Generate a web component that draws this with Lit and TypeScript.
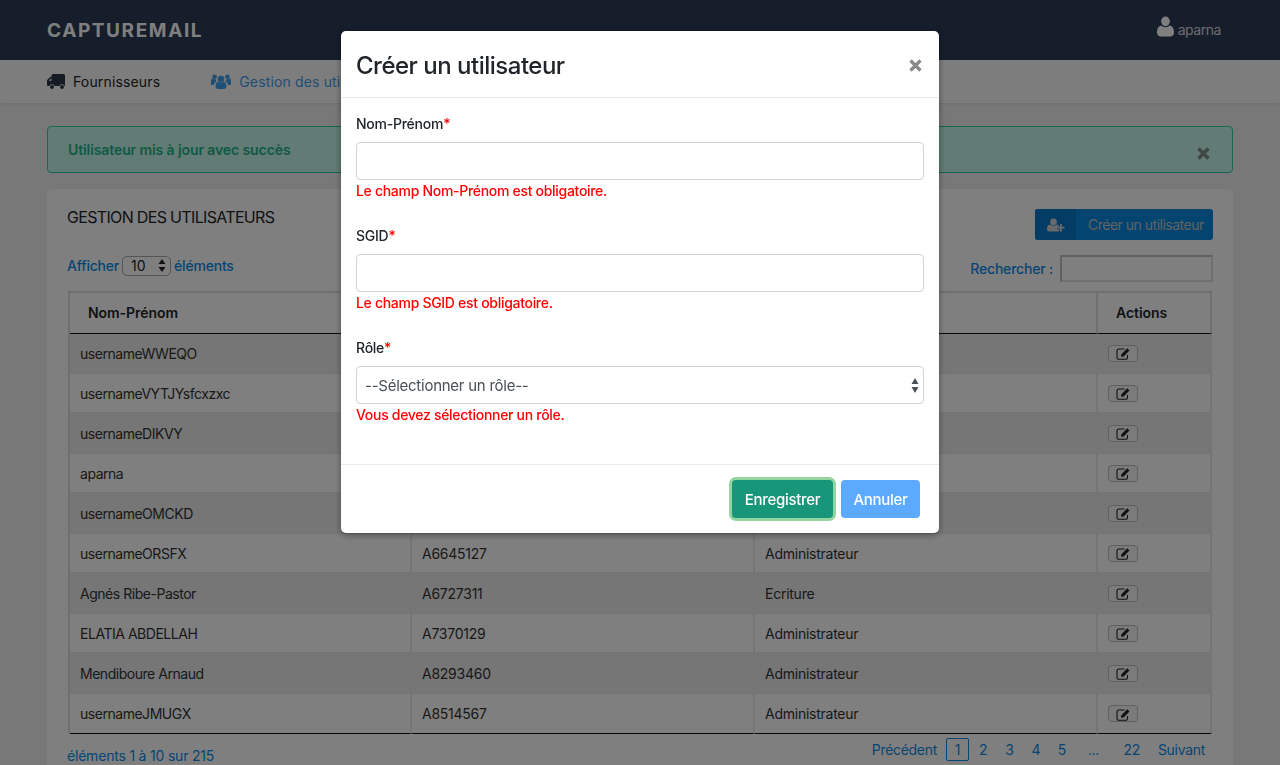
import { LitElement, html, css, svg } from 'lit';
import { customElement } from 'lit/decorators.js';

const userIcon = svg`<circle cx="8" cy="4.600" r="4.100"/><path d="M0 14.200C0 10.800 1.600 8.400 4 8.200c1 .9 2.500 1.400 4 1.400s3-.5 4-1.400c2.400.2 4 2.600 4 6 0 2-1.300 3.300-3 3.300H3c-1.700 0-3-1.300-3-3.300z"/>`;
const usersIcon = svg`<circle cx="10" cy="6" r="3.300"/><circle cx="3.600" cy="3.800" r="2.300"/><circle cx="16.400" cy="3.800" r="2.300"/><path d="M4.500 13c0-2.700 1.400-4.200 3-4.300.7.500 1.600.8 2.500.8s1.800-.3 2.500-.8c1.600.1 3 1.600 3 4.300 0 2-1.100 3-2.500 3h-6c-1.400 0-2.500-1-2.500-3z"/><path d="M0 8.300c0-1.600.5-2.700 1.500-2.700.6.400 1.300.7 2.100.7.300 0 .7 0 1-.2.100.9.500 1.800 1.100 2.400-1.500.5-2.500 1.800-2.800 3.500H1.400C.5 12 0 11.400 0 10.400zM20 8.300c0-1.600-.5-2.700-1.500-2.700-.6.400-1.300.7-2.100.7-.3 0-.7 0-1-.2-.1.900-.5 1.800-1.100 2.400 1.500.5 2.500 1.800 2.800 3.500h1.500c.9 0 1.400-.6 1.400-1.600z"/>`;
const truckIcon = svg`<path fill-rule="evenodd" d="M6 0h10.500A1.500 1.500 0 0 1 18 1.500V12h-.3a3 3 0 0 0-5.400 0H7.700a3 3 0 0 0-5.400 0H1a1 1 0 0 1-1-1V6.800c0-.4.200-.8.400-1.100L3 3.200c.3-.3.700-.5 1.100-.5h.4V1.500A1.500 1.500 0 0 1 6 0zM4.300 4.300 1.800 6.800H4.500V4.300z"/><circle cx="5" cy="13" r="2"/><circle cx="15" cy="13" r="2"/>`;
const userPlusIcon = svg`<circle cx="6.500" cy="3.800" r="3.400"/><path d="M0 10.800c0-2.500 1.200-4 3-4.200.9.800 2.200 1.200 3.500 1.200s2.600-.4 3.500-1.200c.7.100 1.300.4 1.800.8v1.400H10v2.800h2.500V13c-.3.300-.8.500-1.500.5H2.300c-1.400 0-2.300-1-2.300-2.700z"/><path d="M13 6h1.800v2.800h2.700v1.800h-2.700v2.800H13v-2.800h-2.700V8.800H13z"/>`;

const rows = [
  ['usernameWWEQO', '', ''],
  ['usernameVYTJYsfcxzxc', '', ''],
  ['usernameDIKVY', '', ''],
  ['aparna', '', ''],
  ['usernameOMCKD', '', ''],
  ['usernameORSFX', 'A6645127', 'Administrateur'],
  ['Agnés Ribe-Pastor', 'A6727311', 'Ecriture'],
  ['ELATIA ABDELLAH', 'A7370129', 'Administrateur'],
  ['Mendiboure Arnaud', 'A8293460', 'Administrateur'],
  ['usernameJMUGX', 'A8514567', 'Administrateur'],
];

@customElement('app-root')
export class AppRoot extends LitElement {
  static styles = css`
    :host {
      display: block;
      position: relative;
      height: 765px;
      overflow: hidden;
      background: #f0f0f0;
      color: #212529;
      font-family: Inter, 'Liberation Sans', sans-serif;
      font-size: 14px;
      letter-spacing: -0.2px;
    }
    .topbar {
      height: 60px;
      background: #2c3c58;
      padding: 0 59px 0 47px;
      display: flex;
      justify-content: space-between;
      align-items: center;
    }
    .brand {
      color: #fff;
      font-size: 19px;
      font-weight: 700;
      letter-spacing: 1.6px;
    }
    .account {
      display: flex;
      align-items: center;
      gap: 4px;
      color: #d8d8d8;
      margin-top: -7px;
      letter-spacing: -0.45px;
    }
    .account svg { width: 17px; height: 21px; fill: #fff; }
    .account span { margin-top: 6px; }
    .nav {
      height: 43px;
      background: #fafafa;
      padding-left: 47px;
      display: flex;
      align-items: center;
      gap: 51px;
      box-shadow: 0 1px 3px rgba(0, 0, 0, 0.08);
    }
    .nav-item { display: flex; align-items: center; gap: 8px; font-weight: 400; letter-spacing: 0.15px; }
    .nav-item.active { color: #3f9fea; }
    .truck { width: 18px; height: 15px; fill: #2c3646; }
    .users { width: 20px; height: 17px; fill: #3f9fea; }
    main { padding: 23px 47px 0; }
    .alert {
      height: 47px;
      box-sizing: border-box;
      background: #c4f6e8;
      border: 1px solid #2bd0a4;
      border-radius: 4px;
      color: #1eb489;
      font-weight: 600;
      letter-spacing: -0.1px;
      padding: 0 21px 0 20px;
      margin-bottom: 16px;
      display: flex;
      justify-content: space-between;
      align-items: center;
    }
    .alert-close { width: 13px; height: 13px; margin: 7px 1px 0 0; stroke: #808e8a; stroke-width: 3.400; }
    .card {
      background: #fff;
      border-radius: 5px;
      padding: 20px;
      height: 600px;
    }
    .card-head { display: flex; justify-content: space-between; height: 31px; margin-bottom: 15px; }
    h2 { margin: 0; font-size: 16px; line-height: 17px; font-weight: 400; letter-spacing: -0.67px; }
    .add-btn {
      width: 178px;
      height: 31px;
      display: flex;
      align-items: stretch;
      background: #0889e0;
      border: none;
      border-radius: 3px;
      padding: 0;
      color: #c4c4c4;
      font: inherit;
      font-weight: 400;
      letter-spacing: -0.5px;
      overflow: hidden;
    }
    .add-icon {
      width: 41px;
      background: #0778c8;
      display: flex;
      align-items: center;
      justify-content: center;
    }
    .add-icon svg { width: 18px; height: 14px; fill: #d4d4d4; }
    .add-label { flex: 1; line-height: 31px; text-align: left; padding-left: 12px; }
    .tools { display: flex; justify-content: space-between; height: 27px; margin-bottom: 9px; color: #0d8ce8; font-weight: 500; }
    .length { display: flex; align-items: center; gap: 3px; height: 21px; }
    .length select {
      appearance: none;
      width: 49px;
      height: 20px;
      box-sizing: border-box;
      border: 1px solid #a8a8a8;
      border-radius: 5px;
      padding: 0 0 0 8px;
      font: 14px Inter, 'Liberation Sans', sans-serif;
      color: #212529;
      background: #fff url("data:image/svg+xml,%3Csvg xmlns='http://www.w3.org/2000/svg' width='8' height='13'%3E%3Cpath d='M4 0l3.500 5H.5zM4 13L.5 8h7z' fill='%23222'/%3E%3C/svg%3E") no-repeat right 4px center;
    }
    .search { display: flex; align-items: center; gap: 7px; }
    .search input {
      width: 153px;
      height: 27px;
      box-sizing: border-box;
      border-style: solid;
      border-width: 2px;
      border-color: #c0c0c0 #e0e0e0 #e0e0e0 #c0c0c0;
      background: #fff;
      padding: 0;
    }
    table {
      width: 1144px;
      margin-left: 1px;
      border-collapse: separate;
      border-spacing: 0;
      table-layout: fixed;
      border-top: 2px solid #dfdfdf;
      border-left: 2px solid #dfdfdf;
    }
    th {
      height: 41px;
      box-sizing: border-box;
      text-align: left;
      font-weight: 600;
      letter-spacing: -0.05px;
      padding: 0 0 2px 18px;
      border-right: 2px solid #dfdfdf;
      border-bottom: 1px solid #111;
    }
    td {
      height: 40px;
      box-sizing: border-box;
      padding: 0 0 0 10px;
      border-right: 2px solid #eaeaea;
      border-bottom: 2px solid #eaeaea;
      color: #333;
      letter-spacing: -0.47px;
    }
    td + td { letter-spacing: -0.25px; }
    tr.odd td { background: #ececec; }
    tr:last-child td { border-bottom: 1px solid #111; }
    .edit {
      display: block;
      width: 30px;
      height: 17px;
      box-sizing: border-box;
      border: 1px solid #c0c0c0;
      border-radius: 4px;
      background: #f6f6f6;
      padding: 0;
    }
    .edit svg { display: block; margin: 1px auto 0; width: 15px; height: 13px; }
    .table-foot { display: flex; justify-content: space-between; color: #0d8ce8; font-weight: 400; }
    .info { margin-top: 13px; }
    .pages { display: flex; align-items: center; margin: 4px -1px 0 0; height: 23px; letter-spacing: -0.3px; }
    .pages a { padding: 0 8px; line-height: 21px; border: 1px solid transparent; }
    .pages a.num { width: 7px; box-sizing: content-box; text-align: center; padding: 0 8.600px; }
    .pages a.current { border-color: #0d8ce8; border-radius: 2px; padding: 0 7px; margin-right: 0.500px; }
    .pages a.gap { padding: 0 12.500px; }
    .pages a.last { margin-left: 2px; }
    .backdrop {
      position: fixed;
      inset: 0;
      background: rgba(0, 0, 0, 0.5);
    }
    .modal {
      width: 598px;
      height: 502px;
      margin: 31px auto 0;
      background: #fff;
      border-radius: 5px;
      box-shadow: 0 2px 6px rgba(0, 0, 0, 0.4);
      display: flex;
      flex-direction: column;
    }
    .modal-head {
      height: 67px;
      box-sizing: border-box;
      border-bottom: 1px solid #e9ecef;
      padding: 2px 17px 0 15px;
      display: flex;
      justify-content: space-between;
      align-items: center;
    }
    .modal-head h1 { margin: 0; font-size: 24px; font-weight: 500; letter-spacing: -0.5px; }
    .close { width: 13px; height: 13px; stroke: #8a8a8a; stroke-width: 3.400; }
    .modal-body { flex: 1; padding: 15px 15px 0; }
    .field { margin-bottom: 24px; }
    label { display: block; line-height: 21px; margin-bottom: 8px; font-weight: 500; letter-spacing: -0.25px; }
    .req { color: #f00; }
    .control {
      display: block;
      width: 100%;
      height: 38px;
      box-sizing: border-box;
      border: 1px solid #ced4da;
      border-radius: 4px;
      background: #fff;
      padding: 0 8px;
      font: 15px Inter, 'Liberation Sans', sans-serif;
      letter-spacing: -0.25px;
      color: #495057;
    }
    select.control {
      appearance: none;
      background: #fff url("data:image/svg+xml,%3Csvg xmlns='http://www.w3.org/2000/svg' width='8' height='15'%3E%3Cpath d='M4 0l3.500 6H.5zM4 15L.5 9h7z' fill='%23495057'/%3E%3C/svg%3E") no-repeat right 4px center;
    }
    .error { color: #f00; line-height: 21px; font-weight: 500; letter-spacing: -0.3px; }
    .modal-foot {
      height: 69px;
      box-sizing: border-box;
      border-top: 1px solid #e9ecef;
      padding: 15px 19px 0 0;
      display: flex;
      justify-content: flex-end;
      gap: 8px;
    }
    .btn {
      height: 38px;
      border: 1px solid transparent;
      border-radius: 4px;
      color: #fff;
      font: 500 15px Inter, 'Liberation Sans', sans-serif;
      letter-spacing: -0.3px;
      padding: 0;
    }
    .btn.save { width: 101px; background: #17967a; box-shadow: 0 0 0 3px #92d5a0; }
    .btn.cancel { width: 79px; background: #5caaff; }
  `;

  private editIcon() {
    return svg`<svg viewBox="0 0 15 13"><path d="M11.500 8v2.500a1.800 1.800 0 0 1-1.800 1.800H2.800A1.800 1.800 0 0 1 1 10.500V3.800A1.800 1.800 0 0 1 2.800 2H8.500" fill="none" stroke="#222" stroke-width="1.100"/><path d="M5 9.800l.4-2.600L11.300 1.300l2.200 2.200-5.900 5.900z" fill="#222"/></svg>`;
  }

  private closeIcon(cls: string) {
    return svg`<svg class=${cls} viewBox="0 0 13 13"><path d="M1.500 1.500l10 10M11.500 1.500l-10 10" fill="none"/></svg>`;
  }

  render() {
    return html`
      <header class="topbar">
        <div class="brand">CAPTUREMAIL</div>
        <div class="account">
          <svg viewBox="0 0 16 18" preserveAspectRatio="none">${userIcon}</svg><span>aparna</span>
        </div>
      </header>
      <nav class="nav">
        <div class="nav-item"><svg class="truck" viewBox="0 0 18 15">${truckIcon}</svg>Fournisseurs</div>
        <div class="nav-item active"><svg class="users" viewBox="0 0 20 17">${usersIcon}</svg>Gestion des utilisateurs</div>
      </nav>
      <main>
        <div class="alert">
          <span>Utilisateur mis à jour avec succès</span>
          ${this.closeIcon('alert-close')}
        </div>
        <section class="card">
          <div class="card-head">
            <h2>GESTION DES UTILISATEURS</h2>
            <button class="add-btn">
              <span class="add-icon"><svg viewBox="0 0 18 14">${userPlusIcon}</svg></span>
              <span class="add-label">Créer un utilisateur</span>
            </button>
          </div>
          <div class="tools">
            <div class="length">
              Afficher
              <select><option>10</option></select>
              éléments
            </div>
            <div class="search">Rechercher : <input type="text" /></div>
          </div>
          <table>
            <colgroup>
              <col style="width:342px" /><col style="width:343px" /><col style="width:343px" /><col style="width:114px" />
            </colgroup>
            <thead>
              <tr><th>Nom-Prénom</th><th>SGID</th><th>Rôle</th><th>Actions</th></tr>
            </thead>
            <tbody>
              ${rows.map(
                (r, i) => html`<tr class=${i % 2 === 0 ? 'odd' : ''}>
                  <td>${r[0]}</td><td>${r[1]}</td><td>${r[2]}</td>
                  <td><button class="edit">${this.editIcon()}</button></td>
                </tr>`
              )}
            </tbody>
          </table>
          <div class="table-foot">
            <div class="info">éléments 1 à 10 sur 215</div>
            <div class="pages">
              <a>Précédent</a>
              <a class="num current">1</a>
              <a class="num">2</a><a class="num">3</a><a class="num">4</a><a class="num">5</a>
              <a class="gap">...</a>
              <a class="last">22</a>
              <a>Suivant</a>
            </div>
          </div>
        </section>
      </main>
      <div class="backdrop">
        <div class="modal">
          <div class="modal-head">
            <h1>Créer un utilisateur</h1>
            ${this.closeIcon('close')}
          </div>
          <div class="modal-body">
            <div class="field">
              <label>Nom-Prénom<span class="req">*</span></label>
              <input class="control" type="text" />
              <div class="error">Le champ Nom-Prénom est obligatoire.</div>
            </div>
            <div class="field">
              <label>SGID<span class="req">*</span></label>
              <input class="control" type="text" />
              <div class="error">Le champ SGID est obligatoire.</div>
            </div>
            <div class="field">
              <label>Rôle<span class="req">*</span></label>
              <select class="control"><option>--Sélectionner un rôle--</option></select>
              <div class="error">Vous devez sélectionner un rôle.</div>
            </div>
          </div>
          <div class="modal-foot">
            <button class="btn save">Enregistrer</button>
            <button class="btn cancel">Annuler</button>
          </div>
        </div>
      </div>
    `;
  }
}
